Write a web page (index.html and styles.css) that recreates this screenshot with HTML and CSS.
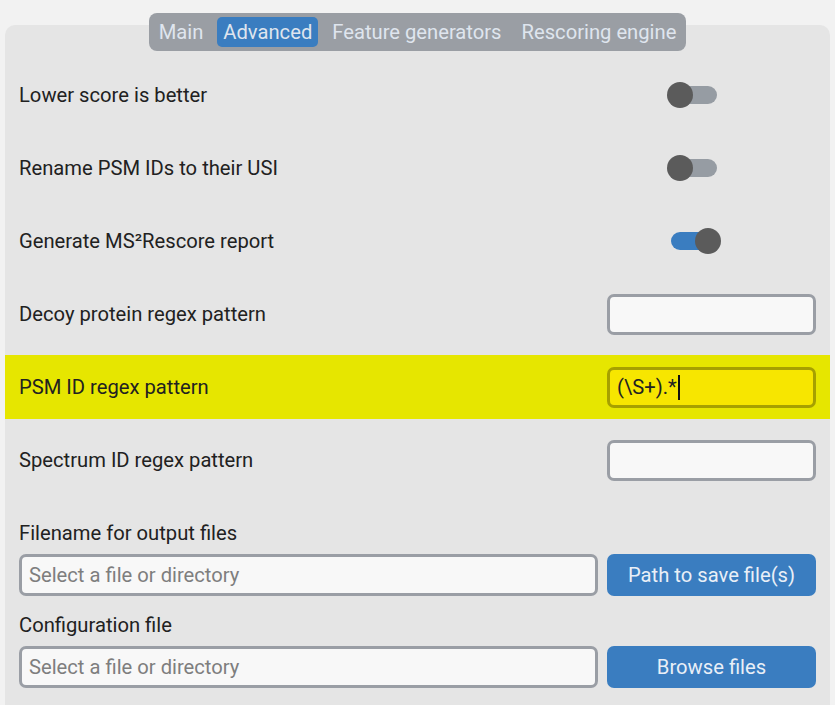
FILE: index.html
```html
<!DOCTYPE html>
<html lang="en">
<head>
<meta charset="utf-8">
<title>MS²Rescore – Advanced</title>
<link rel="stylesheet" href="styles.css">
</head>
<body>
<div class="page">
  <nav class="tabbar">
    <span class="tab">Main</span>
    <span class="tab active">Advanced</span>
    <span class="tab">Feature generators</span>
    <span class="tab">Rescoring engine</span>
  </nav>
  <main class="panel">
    <div class="rows">
      <div class="row">
        <span class="label">Lower score is better</span>
        <div class="control"><span class="switch"><span class="knob"></span></span></div>
      </div>
      <div class="row">
        <span class="label">Rename PSM IDs to their USI</span>
        <div class="control"><span class="switch"><span class="knob"></span></span></div>
      </div>
      <div class="row">
        <span class="label">Generate MS²Rescore report</span>
        <div class="control"><span class="switch on"><span class="knob"></span></span></div>
      </div>
      <div class="row">
        <span class="label">Decoy protein regex pattern</span>
        <div class="control"><div class="field"></div></div>
      </div>
      <div class="row highlight">
        <span class="label">PSM ID regex pattern</span>
        <div class="control"><div class="field focus"><span class="value">(\S+).*</span><span class="caret"></span></div></div>
      </div>
      <div class="row">
        <span class="label">Spectrum ID regex pattern</span>
        <div class="control"><div class="field"></div></div>
      </div>
    </div>
    <div class="filegroup first">
      <div class="flabel">Filename for output files</div>
      <div class="fline">
        <div class="finput">Select a file or directory</div>
        <div class="btn">Path to save file(s)</div>
      </div>
    </div>
    <div class="filegroup">
      <div class="flabel">Configuration file</div>
      <div class="fline">
        <div class="finput">Select a file or directory</div>
        <div class="btn">Browse files</div>
      </div>
    </div>
  </main>
</div>
</body>
</html>
```

FILE: styles.css
```css
html, body {
  margin: 0;
  padding: 0;
  background: #f2f2f2;
  font-family: Roboto, "Liberation Sans", sans-serif;
  color: #212121;
  overflow: hidden;
}

.page {
  padding: 0 5px 0 5px;
}

.tabbar {
  position: relative;
  z-index: 1;
  display: flex;
  width: max-content;
  gap: 8px;
  margin: 13px auto -26px auto;
  padding: 4px;
  background: #9a9ea4;
  border-radius: 8px;
}

.tab {
  height: 30px;
  line-height: 30px;
  padding: 0 6px;
  font-size: 20.2px;
  color: #dfe5ee;
  border-radius: 5px;
}

.tab.active {
  background: #3a7dc0;
}

.panel {
  background: #e5e5e5;
  border-radius: 10px 10px 0 0;
  padding-top: 38px;
  height: 642px;
}

.rows {
  display: flex;
  flex-direction: column;
  gap: 9px;
}

.row {
  display: flex;
  align-items: center;
  justify-content: space-between;
  height: 64px;
  padding: 0 14px;
}

.row.highlight {
  background: #e6e600;
}

.label {
  font-size: 20.2px;
}

.control {
  width: 209px;
  display: flex;
  align-items: center;
}

.switch {
  position: relative;
  display: block;
  width: 46px;
  height: 18px;
  margin-left: 64px;
  border-radius: 9px;
  background: #969ca3;
}

.switch .knob {
  position: absolute;
  top: -4px;
  left: -4px;
  width: 26px;
  height: 26px;
  border-radius: 50%;
  background: #5b5b5b;
}

.switch.on {
  background: #3a7dc0;
}

.switch.on .knob {
  left: 24px;
}

.field {
  box-sizing: border-box;
  width: 209px;
  height: 41px;
  border: 3px solid #9a9ea5;
  border-radius: 7px;
  background: #f8f8f8;
  display: flex;
  align-items: center;
  padding-left: 7px;
  font-size: 20.2px;
}

.field.focus {
  background: #f7e600;
  border-color: #a6a000;
}

.value {
  color: #222;
}

.caret {
  display: inline-block;
  width: 2px;
  height: 25px;
  background: #111;
  margin-left: 1px;
}

.filegroup {
  padding: 0 14px;
  margin-top: 17px;
}

.filegroup.first {
  margin-top: 29px;
}

.flabel {
  font-size: 20.2px;
  line-height: 24px;
  margin-bottom: 9px;
}

.fline {
  display: flex;
  gap: 9px;
}

.finput {
  box-sizing: border-box;
  flex: 1;
  height: 42px;
  border: 3px solid #9a9ea5;
  border-radius: 7px;
  background: #f8f8f8;
  color: #7e7e7e;
  font-size: 20.2px;
  line-height: 36px;
  padding-left: 7px;
}

.btn {
  width: 209px;
  height: 42px;
  line-height: 42px;
  text-align: center;
  background: #3a7dc0;
  color: #e9eff7;
  font-size: 20.2px;
  border-radius: 7px;
}
```
